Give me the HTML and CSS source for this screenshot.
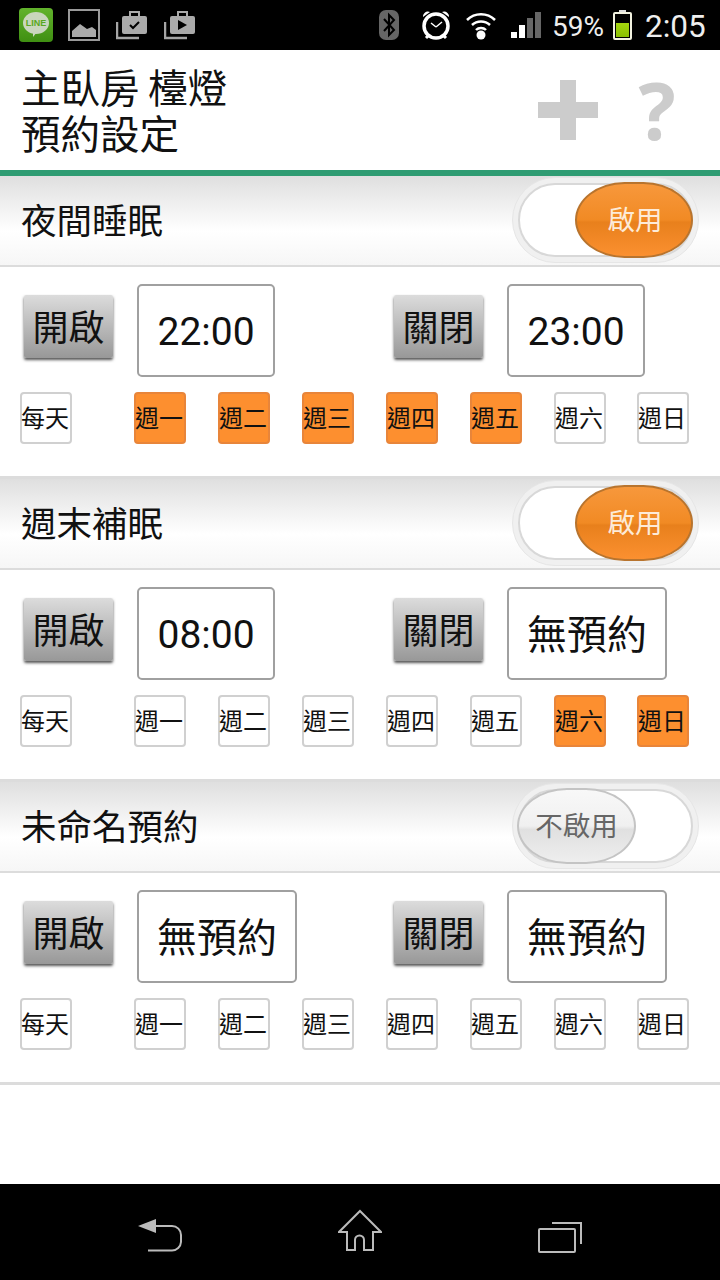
FILE: index.html
```html
<!DOCTYPE html>
<html>
  <head>
    <meta charset="utf-8">
    <meta name="viewport" content="width=device-width">
    <title>預約設定</title>
    <link rel="stylesheet" href="styles.css">
  </head>

  <body>
    <div class="status-bar">
      <svg class="ic-line" width="34" height="34" viewBox="0 0 34 34">
        <defs><linearGradient id="lineBg" x1="0" y1="0" x2="0" y2="1"><stop offset="0" stop-color="#62b32c"/><stop offset="1" stop-color="#3f8f12"/></linearGradient></defs>
        <rect width="34" height="34" rx="4" fill="url(#lineBg)"/>
        <ellipse cx="17" cy="15" rx="13" ry="11" fill="#c9d6bd"/>
        <path d="M14 24l4 0-4 5z" fill="#c9d6bd"/>
        <text x="17" y="18" class="line-text" text-anchor="middle">LINE</text>
      </svg>
      <svg class="ic-pic" width="32" height="32" viewBox="0 0 32 32">
        <rect x="1" y="1" width="30" height="30" fill="none" stroke="#9a9a9a" stroke-width="2"/>
        <path d="M4 28V22L12 15 19 20 24 18 28 21V28Z" fill="#aaa"/>
      </svg>
      <svg class="ic-case" width="32" height="30" viewBox="0 0 32 30">
        <path d="M1 12V28H23" fill="none" stroke="#a5a5a5" stroke-width="2.5"/>
        <rect x="6" y="6" width="25" height="18" rx="2" fill="#aaa"/>
        <path d="M14 6V2H23V6" fill="none" stroke="#aaa" stroke-width="2"/>
        <path d="M14 15l3 3 6-6" fill="none" stroke="#000" stroke-width="2"/>
      </svg>
      <svg class="ic-case" width="32" height="30" viewBox="0 0 32 30">
        <path d="M1 12V28H23" fill="none" stroke="#a5a5a5" stroke-width="2.5"/>
        <rect x="6" y="6" width="25" height="18" rx="2" fill="#aaa"/>
        <path d="M14 6V2H23V6" fill="none" stroke="#aaa" stroke-width="2"/>
        <path d="M14 10l9 5-9 5z" fill="#000"/>
      </svg>

      <svg class="ic-bt" width="20" height="30" viewBox="0 0 20 30">
        <rect width="20" height="30" rx="7" fill="#666"/>
        <path d="M5 9l10 11-5 5V5l5 5L5 21" fill="none" stroke="#000" stroke-width="2"/>
      </svg>
      <svg class="ic-alarm" width="32" height="32" viewBox="0 0 32 32">
        <circle cx="16" cy="17" r="12" fill="none" stroke="#fff" stroke-width="3.5"/>
        <path d="M3 8a5 5 0 0 1 7-5zM29 8a5 5 0 0 0-7-5z" fill="#fff"/>
        <path d="M16 18l-5-4M16 18l6-5" fill="none" stroke="#fff" stroke-width="1.5"/>
        <path d="M6 29l3-3M26 29l-3-3" stroke="#fff" stroke-width="3"/>
      </svg>
      <svg class="ic-wifi" width="32" height="30" viewBox="0 0 32 30">
        <path d="M2 10a20 20 0 0 1 28 0M7 15a13 13 0 0 1 18 0M11 20a7 7 0 0 1 10 0" fill="none" stroke="#fff" stroke-width="2.5"/>
        <circle cx="16" cy="25" r="4.5" fill="#fff"/>
      </svg>
      <div class="signal">
        <span class="bar bar-1"></span>
        <span class="bar bar-2"></span>
        <span class="bar bar-3"></span>
        <span class="bar bar-4"></span>
      </div>
      <span class="batt-text">59%</span>
      <svg class="ic-batt" width="19" height="30" viewBox="0 0 19 30">
        <defs><linearGradient id="battFill" x1="0" y1="0" x2="0" y2="1"><stop offset="0" stop-color="#a4d50e"/><stop offset="1" stop-color="#8ac000"/></linearGradient></defs>
        <rect x="6" y="0" width="7" height="3" fill="#ddd"/>
        <rect x="1" y="3" width="17" height="26" rx="1" fill="#000" stroke="#f2f2e0" stroke-width="2"/>
        <rect x="3" y="13" width="13" height="14" fill="url(#battFill)"/>
      </svg>
      <span class="clock">2:05</span>
    </div>

    <div class="title-bar">
      <div class="title">主臥房 檯燈<br>預約設定</div>
      <svg class="ic-plus" width="60" height="60" viewBox="0 0 60 60">
        <path d="M22 0H38V22H60V38H38V60H22V38H0V22H22Z" fill="#ccc"/>
      </svg>
      <span class="help">?</span>
    </div>

    <div class="main">
      <div class="section">
        <div class="section-head">
          <div class="section-name">夜間睡眠</div>
          <div class="toggle"><div class="track"></div><div class="knob knob-on">啟用</div></div>
        </div>
        <div class="section-body">
          <div class="times">
            <div class="time-group"><div class="time-btn">開啟</div><div class="time-box">22:00</div></div>
            <div class="time-group"><div class="time-btn">關閉</div><div class="time-box">23:00</div></div>
          </div>
          <div class="days">
            <div class="day day-all">每天</div>
            <div class="day on">週一</div>
            <div class="day on">週二</div>
            <div class="day on">週三</div>
            <div class="day on">週四</div>
            <div class="day on">週五</div>
            <div class="day">週六</div>
            <div class="day">週日</div>
          </div>
        </div>
      </div>

      <div class="section">
        <div class="section-head">
          <div class="section-name">週末補眠</div>
          <div class="toggle"><div class="track"></div><div class="knob knob-on">啟用</div></div>
        </div>
        <div class="section-body">
          <div class="times">
            <div class="time-group"><div class="time-btn">開啟</div><div class="time-box">08:00</div></div>
            <div class="time-group"><div class="time-btn">關閉</div><div class="time-box no-time">無預約</div></div>
          </div>
          <div class="days">
            <div class="day day-all">每天</div>
            <div class="day">週一</div>
            <div class="day">週二</div>
            <div class="day">週三</div>
            <div class="day">週四</div>
            <div class="day">週五</div>
            <div class="day on">週六</div>
            <div class="day on">週日</div>
          </div>
        </div>
      </div>

      <div class="section">
        <div class="section-head">
          <div class="section-name">未命名預約</div>
          <div class="toggle"><div class="track"></div><div class="knob knob-off">不啟用</div></div>
        </div>
        <div class="section-body">
          <div class="times">
            <div class="time-group"><div class="time-btn">開啟</div><div class="time-box no-time">無預約</div></div>
            <div class="time-group"><div class="time-btn">關閉</div><div class="time-box no-time">無預約</div></div>
          </div>
          <div class="days">
            <div class="day day-all">每天</div>
            <div class="day">週一</div>
            <div class="day">週二</div>
            <div class="day">週三</div>
            <div class="day">週四</div>
            <div class="day">週五</div>
            <div class="day">週六</div>
            <div class="day">週日</div>
          </div>
        </div>
      </div>
    </div>

    <div class="nav-bar">
      <svg width="44" height="34" viewBox="0 0 44 34">
        <path d="M0 7L18 0V14Z" fill="#bbb"/>
        <path d="M16 7H34a9 9 0 0 1 9 9v7a9 9 0 0 1-9 8.500H10" fill="none" stroke="#bbb" stroke-width="2"/>
      </svg>
      <svg width="44" height="44" viewBox="0 0 44 44">
        <path d="M22 2L43 23H35V41H26V31a4 4 0 0 0-9 0V41H9V23H1Z" fill="none" stroke="#bbb" stroke-width="2"/>
      </svg>
      <svg width="44" height="32" viewBox="0 0 44 32">
        <rect x="1" y="8" width="36" height="23" rx="1" fill="none" stroke="#bbb" stroke-width="2"/>
        <path d="M14 2H43V23" fill="none" stroke="#bbb" stroke-width="2"/>
      </svg>
    </div>
  </body>
</html>
```

FILE: styles.css
```css
body {
  margin: 0;
  width: 720px;
  height: 1280px;
  display: flex;
  flex-direction: column;
  background-color: white;
  font-family: "Noto Sans CJK TC", "Noto Sans", sans-serif;
  color: #111;
  overflow: hidden;
}

/* status bar */
.status-bar {
  height: 50px;
  flex: none;
  background-color: black;
  display: flex;
  align-items: center;
  padding-left: 19px;
  box-sizing: border-box;
}

.status-bar svg {
  flex: none;
}

.line-text {
  font-family: "Liberation Sans", sans-serif;
  font-size: 9px;
  font-weight: bold;
  fill: #58a821;
}

.ic-pic {
  margin-left: 15px;
}

.ic-case {
  margin-left: 16px;
}

.ic-bt {
  margin-left: 183px;
}

.ic-alarm {
  margin-left: 21px;
}

.ic-wifi {
  margin-left: 13px;
}

.signal {
  width: 30px;
  height: 26px;
  margin-left: 14px;
  display: flex;
  align-items: flex-end;
  gap: 2px;
}

.bar {
  width: 6px;
  background-color: #666;
}

.bar-1 {
  height: 6px;
  background-color: white;
}

.bar-2 {
  height: 13px;
  background-color: white;
}

.bar-3 {
  height: 20px;
}

.bar-4 {
  height: 26px;
}

.batt-text,
.clock {
  font-family: Roboto, sans-serif;
  color: #eee;
  margin-top: 3px;
}

.batt-text {
  font-size: 28px;
  margin-left: 11px;
}

.ic-batt {
  margin-left: 9px;
}

.clock {
  font-size: 31.500px;
  margin-left: 13px;
}

/* title */
.title-bar {
  height: 126px;
  flex: none;
  box-sizing: border-box;
  border-bottom: 6px solid #2f9c73;
  display: flex;
  align-items: center;
  padding-left: 21px;
}

.title {
  font-size: 39.500px;
  line-height: 46px;
  flex: 1;
  margin-top: -3px;
}

.ic-plus {
  flex: none;
  margin-right: 36px;
}

.help {
  font-family: "Open Sans", sans-serif;
  font-weight: bold;
  font-size: 78px;
  line-height: 60px;
  color: #ccc;
  width: 46px;
  margin-right: 40px;
  text-align: center;
}

/* sections */
.main {
  flex: 1;
}

.section-head {
  height: 89px;
  box-sizing: border-box;
  display: flex;
  align-items: center;
  justify-content: space-between;
  padding: 0 21px;
  background: linear-gradient(to bottom, #dfdfdf, #ffffff 62%, #f6f6f6);
}

.section-name {
  font-size: 35.500px;
  margin-top: -5px;
}

.toggle {
  position: relative;
  width: 187px;
  height: 86px;
  margin-bottom: 1px;
  box-sizing: border-box;
  border-radius: 43px;
  background-color: #f0f0f0;
  border: 1px solid #e6e6e6;
  padding: 5px;
}

.track {
  height: 100%;
  box-sizing: border-box;
  border-radius: 38px;
  background-color: white;
  border: 2px solid #d8d8d8;
}

.knob {
  position: absolute;
  top: 4px;
  height: 76px;
  box-sizing: border-box;
  border-radius: 42% / 50%;
  display: flex;
  align-items: center;
  justify-content: center;
  font-size: 27.500px;
  padding-bottom: 4px;
}

.knob-on {
  left: 62px;
  width: 118px;
  padding-left: 2px;
  color: #fdebd8;
  border: 2px solid #b8742e;
  background: linear-gradient(to bottom, #f7983c, #f18a24 50%, #e8801c 53%, #fb9030);
}

.knob-off {
  left: 4px;
  width: 119px;
  color: #666;
  border: 2px solid #c4c4c4;
  background: linear-gradient(to bottom, #f8f8f8, #f0f0f0 50%, #e0e0e0 55%, #eeeeee);
}

.section-body {
  height: 214px;
  box-sizing: border-box;
  border-top: 2px solid #dcdcdc;
  border-bottom: 3px solid #dcdcdc;
  padding-top: 17px;
}

.times {
  display: grid;
  grid-template-columns: 370px 1fr;
  padding-left: 24px;
  height: 93px;
}

.time-group {
  display: flex;
  align-items: center;
}

.time-btn {
  width: 89px;
  height: 63px;
  box-sizing: border-box;
  margin-right: 24px;
  margin-bottom: 8px;
  padding-bottom: 4px;
  font-size: 36px;
  display: flex;
  align-items: center;
  justify-content: center;
  border-radius: 2px;
  background: linear-gradient(to bottom, #dcdcdc, #989898);
  box-shadow: 0 2px 3px #555;
}

.time-box {
  height: 93px;
  box-sizing: border-box;
  border: 2px solid #a0a0a0;
  border-radius: 5px;
  padding: 2px 18.500px 0;
  display: flex;
  align-items: center;
  font-family: Roboto, "Noto Sans CJK TC", sans-serif;
  font-size: 39px;
  color: #111;
}

.no-time {
  padding: 0 18px 4px;
  font-size: 40px;
}

.days {
  display: flex;
  gap: 32px;
  padding-left: 20px;
  margin-top: 15px;
}

.day {
  width: 52px;
  height: 52px;
  box-sizing: border-box;
  border: 2px solid #d0d0d0;
  border-radius: 4px;
  padding-bottom: 4px;
  display: flex;
  align-items: center;
  font-size: 24px;
  text-indent: -1px;
  white-space: nowrap;
}

.day:last-child {
  margin-left: -1px;
}

.day-all {
  margin-right: 30px;
}

.day.on {
  background-color: #fd8f2f;
  border-color: #e8853a;
}

/* bottom nav */
.nav-bar {
  height: 96px;
  flex: none;
  background-color: black;
  display: grid;
  grid-template-columns: repeat(3, 200px);
  justify-items: center;
  align-items: end;
  padding: 0 60px 27px;
  box-sizing: border-box;
}
```
